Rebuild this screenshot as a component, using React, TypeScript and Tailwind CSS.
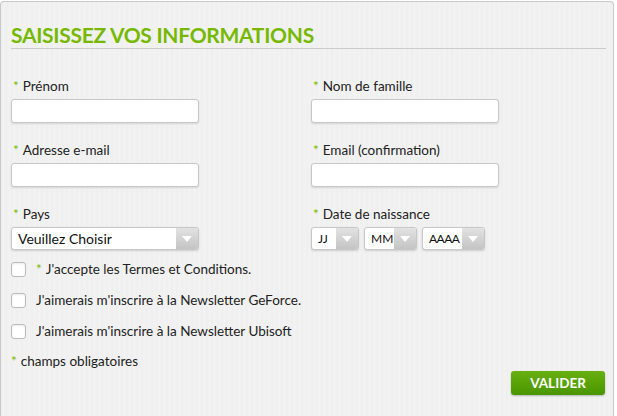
import React from "react";

const font = "font-['Lato','Open_Sans',sans-serif]";

function Star() {
  return <span className="text-[#76b900] mr-1">*</span>;
}

function Field({ label }: { label: string }) {
  return (
    <div className="flex flex-col">
      <label className="h-4 leading-4 pl-[2px] text-[13.5px] text-[#222]">
        <Star />
        {label}
      </label>
      <input
        type="text"
        className="mt-[5px] w-[188px] h-[24px] rounded-[3px] border border-[#c8c8c8] bg-white shadow-[0_1px_2px_rgba(0,0,0,0.12)] outline-none"
      />
    </div>
  );
}

function Select({
  text,
  width,
  textClass = "text-[14px] pl-[6px]",
}: {
  text: string;
  width: string;
  textClass?: string;
}) {
  return (
    <div
      className={`flex h-[23px] ${width} overflow-hidden rounded-[3px] border border-[#c8c8c8] bg-white shadow-[0_1px_2px_rgba(0,0,0,0.15)]`}
    >
      <span className={`flex-1 leading-[21px] text-[#111] whitespace-nowrap ${textClass}`}>
        {text}
      </span>
      <span className="flex w-[22px] flex-none items-center justify-center bg-gradient-to-b from-[#e2e2e2] to-[#c4c4c4]">
        <svg width="10" height="6" viewBox="0 0 10 6">
          <path d="M0 0 L10 0 L5 6 Z" fill="#ffffff" />
        </svg>
      </span>
    </div>
  );
}

function Check({ children }: { children: React.ReactNode }) {
  return (
    <div className="flex h-[16px] items-center">
      <span className="h-[15px] w-[15px] rounded-[3px] border border-[#bbb] bg-white shadow-[inset_0_1px_2px_rgba(0,0,0,0.08)]" />
      <span className="ml-[10px] text-[13.5px] text-[#222]">{children}</span>
    </div>
  );
}

export default function App() {
  return (
    <div className={`w-[617px] h-[416px] bg-white pt-px ${font}`}>
      <div className="h-[415px] w-[614px] rounded-t-[4px] border border-b-0 border-[#c8c8c8] bg-[#f1f1f1] bg-[repeating-linear-gradient(90deg,#f2f2f2_0px,#eeeeee_1px,#f3f3f3_3px,#f0f0f0_5px)] pl-[10px] pr-[7px]">
        {/* TITLE */}
        <h1 className="mt-[21px] h-[24px] text-[21px] font-bold leading-[24px] tracking-[-0.3px] text-[#76b900]">
          SAISISSEZ VOS INFORMATIONS
        </h1>
        <div className="mt-px h-px bg-[#cccccc]" />

        {/* FIELDS */}
        <div className="mt-[29px] grid grid-cols-[300px_1fr] gap-y-[19px]">
          <Field label="Prénom" />
          <Field label="Nom de famille" />
          <Field label="Adresse e-mail" />
          <Field label="Email (confirmation)" />

          <div className="flex flex-col">
            <label className="h-4 leading-4 pl-[2px] text-[13.5px] text-[#222]">
              <Star />
              Pays
            </label>
            <div className="mt-[5px]">
              <Select text="Veuillez Choisir" width="w-[188px]" />
            </div>
          </div>

          <div className="flex flex-col">
            <label className="h-4 leading-4 pl-[2px] text-[13.5px] text-[#222]">
              <Star />
              Date de naissance
            </label>
            <div className="mt-[5px] flex gap-[5px]">
              <Select text="JJ" width="w-[48px]" textClass="text-[12px] pl-[6px]" />
              <Select text="MM" width="w-[53px]" textClass="text-[12px] pl-[6px]" />
              <Select text="AAAA" width="w-[63px]" textClass="text-[12px] pl-[6px] tracking-[-0.5px]" />
            </div>
          </div>
        </div>

        {/* CHECKBOXES */}
        <div className="mt-[11px] flex flex-col gap-[15px]">
          <Check>
            <Star />
            J'accepte les Termes et Conditions.
          </Check>
          <Check>J'aimerais m'inscrire à la Newsletter GeForce.</Check>
          <Check>J'aimerais m'inscrire à la Newsletter Ubisoft</Check>
        </div>

        <p className="mt-[14px] text-[13.5px] leading-4 text-[#222]">
          <Star />
          champs obligatoires
        </p>

        {/* ACTIONS */}
        <div className="mt-[2px] flex justify-end pr-px">
          <button className="h-[24px] w-[94px] rounded-[3px] bg-gradient-to-b from-[#68b010] to-[#4a9600] text-[13.5px] font-bold text-white shadow-[0_1px_2px_rgba(0,0,0,0.25)]">
            VALIDER
          </button>
        </div>
      </div>
    </div>
  );
}
